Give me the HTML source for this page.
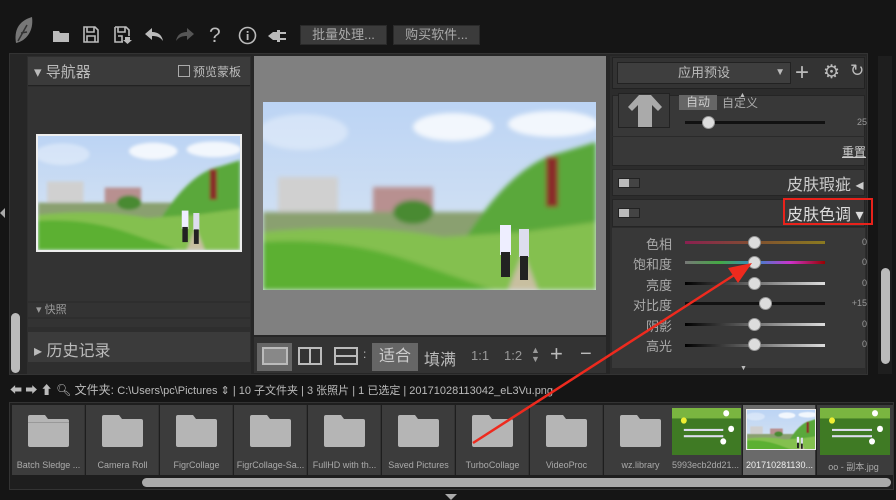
<!DOCTYPE html>
<html><head><meta charset="utf-8"><style>
*{margin:0;padding:0;box-sizing:border-box}
body{width:896px;height:500px;background:#151515;position:relative;overflow:hidden;font-family:"Liberation Sans","Noto Sans CJK SC",sans-serif;color:#bbb}
.a{position:absolute}
.btn{position:absolute;top:25px;height:20px;background:#3b3b3b;border:1px solid #2a2a2a;color:#aaa;font-size:13px;line-height:18px;text-align:center}
.ic{position:absolute;top:26px;color:#bbb;font-size:20px;line-height:20px}
.lbl{position:absolute;right:224px;font-size:13px;color:#aaa;text-align:right;width:60px}
.trk{position:absolute;left:685px;width:140px;height:3px}
.knob{position:absolute;width:13px;height:13px;border-radius:50%;background:#ddd;border:1px solid #999}
.val{position:absolute;left:845px;width:22px;text-align:right;font-size:9px;color:#999}
.fi{position:absolute;top:405px;width:73px;height:70px;background:#3c3c3c;border-right:1px solid #333}
.fd{position:absolute;left:16px;top:10px;width:41px;height:32px}
.fl{position:absolute;left:0;width:73px;top:55px;text-align:center;font-size:9px;color:#aaa;white-space:nowrap;overflow:hidden}
</style></head><body>
<svg width="0" height="0" style="position:absolute"><defs>
<linearGradient id="sky" x1="0" y1="0" x2="0" y2="1"><stop offset="0" stop-color="#bcd4f4"/><stop offset="1" stop-color="#dbe6f2"/></linearGradient>
<filter id="bl"><feGaussianBlur stdDeviation="2.5"/></filter>
<symbol id="photo" viewBox="0 0 333 188" preserveAspectRatio="none">
<rect width="333" height="188" fill="url(#sky)"/>
<g filter="url(#bl)">
<ellipse cx="190" cy="25" rx="40" ry="14" fill="#fff" opacity=".8"/><ellipse cx="290" cy="22" rx="45" ry="13" fill="#fff" opacity=".8"/>
<ellipse cx="40" cy="30" rx="45" ry="18" fill="#fff" opacity=".35"/>
<rect x="15" y="75" width="60" height="35" fill="#d0d0d0"/><rect x="110" y="85" width="60" height="35" fill="#b89090"/>
<rect x="0" y="110" width="333" height="30" fill="#8aa070"/>
<path d="M200 140 Q250 60 300 50 L333 40 L333 130 Z" fill="#5aa83a"/>
<ellipse cx="150" cy="110" rx="20" ry="12" fill="#4a8a30"/>
<rect x="283" y="55" width="12" height="50" fill="#8a2a2a"/>
<path d="M0 130 Q100 120 180 135 L260 130 L333 120 L333 188 L0 188Z" fill="#84c050"/>
<path d="M0 140 Q80 135 150 160 L230 188 L0 188Z" fill="#5cb030"/>
<path d="M245 188 L260 150 L275 188Z" fill="#c8bfa0"/>
</g>
<rect x="237" y="123" width="11" height="30" fill="#eef"/><rect x="238" y="150" width="9" height="25" fill="#222"/>
<rect x="256" y="127" width="10" height="28" fill="#dde"/><rect x="257" y="154" width="8" height="24" fill="#222"/>
</symbol>
<symbol id="grass" viewBox="0 0 70 45" preserveAspectRatio="none">
<rect width="70" height="45" fill="#3f7a24"/><rect y="0" width="70" height="10" fill="#7ab540"/>
<circle cx="55" cy="5" r="3" fill="#fff"/><circle cx="60" cy="20" r="3" fill="#fff"/><circle cx="52" cy="32" r="3" fill="#fff"/><circle cx="12" cy="12" r="3" fill="#ee3"/>
<rect x="12" y="20" width="40" height="2" fill="#dde"/><rect x="12" y="26" width="40" height="2" fill="#dde"/>
</symbol>
</defs></svg>

<svg class="a" style="left:12px;top:15px" width="24" height="32" viewBox="0 0 24 32"><path d="M20 2 C6 6 2 16 4 28 C14 26 22 16 20 2Z" fill="#777"/><path d="M6 26 L15 10 M9 18 L15 17" stroke="#333" stroke-width="1.5" fill="none"/></svg>
<svg class="a" style="left:53px;top:29px" width="16" height="13"><path d="M0 2h6l1 2h9v9H0z" fill="#bbb"/></svg>
<svg class="a" style="left:83px;top:26px" width="16" height="17" viewBox="0 0 16 17"><path d="M1 1h11l3 3v12H1z M4 1v5h7V1 M4 10h8v6H4z" stroke="#bbb" stroke-width="1.6" fill="none"/></svg>
<svg class="a" style="left:114px;top:26px" width="18" height="18" viewBox="0 0 18 18"><path d="M1 1h11l3 3v6 M1 1v15h8 M4 1v5h7V1 M4 10h4v6" stroke="#bbb" stroke-width="1.6" fill="none"/><path d="M11 11h5v3h2l-4.5 4-4.5-4h2z" fill="#bbb"/></svg>
<svg class="a" style="left:145px;top:28px" width="18" height="14"><path d="M7 0L0 6l7 6V8c5 0 8 1 11 5-1-6-5-9-11-9z" fill="#bbb"/></svg>
<svg class="a" style="left:176px;top:28px" width="18" height="14"><path d="M11 0l7 6-7 6V8C6 8 3 9 0 13 1 7 5 4 11 4z" fill="#555"/></svg>
<div class="ic" style="left:209px;font-size:21px">?</div>
<svg class="a" style="left:238px;top:26px" width="19" height="19"><circle cx="9.5" cy="9.5" r="8" stroke="#bbb" stroke-width="1.6" fill="none"/><rect x="8.7" y="8" width="1.8" height="6" fill="#bbb"/><rect x="8.7" y="5" width="1.8" height="1.8" fill="#bbb"/></svg>
<svg class="a" style="left:268px;top:29px" width="20" height="14"><path d="M0 7l5-4h4v8H5z M9 1h3v12H9z M12 3h6v2h-6z M12 9h6v2h-6z" fill="#bbb"/></svg>
<div class="btn" style="left:300px;width:87px">批量处理...</div>
<div class="btn" style="left:393px;width:87px">购买软件...</div>

<div class="a" style="left:9px;top:53px;width:859px;height:322px;background:#262626;border:1px solid #333"></div>
<div class="a" style="left:0;top:208px;width:0;height:0;border-top:5px solid transparent;border-bottom:5px solid transparent;border-right:5px solid #aaa"></div>
<div class="a" style="left:11px;top:313px;width:9px;height:60px;background:#bbb;border-radius:5px"></div>

<div class="a" style="left:27px;top:56px;width:224px;height:318px;background:#2e2e2e"></div>
<div class="a" style="left:28px;top:57px;width:222px;height:29px;background:#3b3b3b;border-bottom:1px solid #222"></div>
<div class="a" style="left:34px;top:61px;font-size:15px;color:#bbb">▾ 导航器</div>
<div class="a" style="left:178px;top:65px;width:12px;height:12px;border:1px solid #aaa"></div>
<div class="a" style="left:193px;top:63px;font-size:12px;color:#bbb">预览蒙板</div>
<div class="a" style="left:28px;top:87px;width:222px;height:214px;background:#333"></div>
<div class="a" style="left:36px;top:134px;width:206px;height:118px;border:2px solid #eee;background:#fff"><svg width="202" height="114"><use href="#photo" width="202" height="114"/></svg></div>
<div class="a" style="left:28px;top:303px;width:222px;height:14px;background:#333;font-size:11px;color:#999;line-height:14px;padding-left:8px;overflow:hidden">▾ 快照</div>
<div class="a" style="left:28px;top:319px;width:222px;height:8px;background:#333"></div>
<div class="a" style="left:28px;top:332px;width:222px;height:30px;background:#3b3b3b"></div>
<div class="a" style="left:34px;top:337px;font-size:16px;color:#bbb">▸ 历史记录</div>

<div class="a" style="left:254px;top:56px;width:352px;height:279px;background:#808080"></div>
<svg class="a" style="left:263px;top:102px" width="333" height="188"><use href="#photo" width="333" height="188"/></svg>
<div class="a" style="left:254px;top:337px;width:352px;height:36px;background:#333"></div>
<div class="a" style="left:257px;top:343px;width:35px;height:28px;background:#666"></div>
<div class="a" style="left:262px;top:347px;width:26px;height:18px;border:2px solid #bbb;background:#888"></div>
<div class="a" style="left:298px;top:347px;width:24px;height:18px;border:2px solid #bbb"></div><div class="a" style="left:309px;top:347px;width:2px;height:18px;background:#bbb"></div>
<div class="a" style="left:334px;top:347px;width:24px;height:18px;border:2px solid #bbb"></div><div class="a" style="left:334px;top:355px;width:24px;height:2px;background:#bbb"></div>
<div class="a" style="left:363px;top:347px;font-size:12px;color:#bbb">:</div>
<div class="a" style="left:372px;top:343px;width:46px;height:28px;background:#666;color:#ccc;font-size:16px;text-align:center;line-height:28px">适合</div>
<div class="a" style="left:424px;top:346px;font-size:16px;color:#bbb">填满</div>
<div class="a" style="left:471px;top:348px;font-size:13px;color:#999">1:1</div>
<div class="a" style="left:504px;top:348px;font-size:13px;color:#999">1:2</div>
<div class="a" style="left:531px;top:346px;font-size:9px;color:#999;line-height:9px">▲<br>▼</div>
<div class="a" style="left:550px;top:341px;font-size:22px;color:#bbb">+</div>
<div class="a" style="left:580px;top:343px;font-size:20px;color:#bbb">−</div>

<div class="a" style="left:610px;top:56px;width:256px;height:318px;background:#2c2c2c"></div>
<div class="a" style="left:612px;top:57px;width:253px;height:32px;background:#333;border:1px solid #222"></div>
<div class="a" style="left:617px;top:62px;width:174px;height:22px;background:#3e3e3e;border:1px solid #222;font-size:13px;color:#bbb;line-height:20px;text-align:center">应用预设<span style="position:absolute;right:5px;font-size:10px">▼</span></div>
<div class="a" style="left:795px;top:59px;font-size:24px;color:#bbb">+</div>
<div class="a" style="left:823px;top:61px;font-size:19px;color:#bbb">⚙</div>
<div class="a" style="left:850px;top:61px;font-size:17px;color:#bbb">↻</div>
<div class="a" style="left:612px;top:95px;width:253px;height:71px;background:#383838;border:1px solid #252525"></div>
<div class="a" style="left:739px;top:92px;font-size:7px;color:#bbb">▲</div>
<div class="a" style="left:618px;top:93px;width:52px;height:35px;border:1px solid #222;background:#383838"></div>
<svg class="a" style="left:626px;top:95px" width="38" height="32"><path d="M13 0h12l11 12-4 4-6-6v22H12V10l-6 6-4-4z" fill="#aaa"/></svg>
<div class="a" style="left:679px;top:95px;width:38px;height:15px;background:#666;color:#ccc;font-size:12px;line-height:15px;text-align:center">自动</div>
<div class="a" style="left:722px;top:94px;font-size:12px;color:#aaa">自定义</div>
<div class="trk" style="top:121px;background:#111"></div>
<div class="knob" style="left:702px;top:116px"></div>
<div class="val" style="top:117px">25</div>
<div class="a" style="left:612px;top:136px;width:253px;height:1px;background:#2a2a2a"></div>
<div class="a" style="left:842px;top:143px;font-size:12px;color:#ccc;text-decoration:underline">重置</div>
<div class="a" style="left:612px;top:169px;width:253px;height:27px;background:#383838;border:1px solid #252525"></div>
<div class="a" style="left:618px;top:178px;width:22px;height:10px;border:1px solid #222;background:#444"><div style="width:10px;height:8px;background:#bbb"></div></div>
<div class="a" style="left:787px;top:171px;font-size:16px;color:#ccc">皮肤瑕疵 ◂</div>
<div class="a" style="left:612px;top:199px;width:253px;height:28px;background:#383838;border:1px solid #252525"></div>
<div class="a" style="left:618px;top:208px;width:22px;height:10px;border:1px solid #222;background:#444"><div style="width:10px;height:8px;background:#bbb"></div></div>
<div class="a" style="left:783px;top:198px;width:90px;height:27px;border:2px solid #e8221b"></div>
<div class="a" style="left:787px;top:201px;font-size:16px;color:#ddd">皮肤色调 ▾</div>
<div class="a" style="left:612px;top:228px;width:253px;height:140px;background:#383838"></div>
<div class="lbl" style="top:234px">色相</div>
<div class="trk" style="top:241px;background:linear-gradient(90deg,#8a2050,#805030,#8a7a20)"></div>
<div class="knob" style="left:748px;top:236px"></div><div class="val" style="top:237px">0</div>
<div class="lbl" style="top:254px">饱和度</div>
<div class="trk" style="top:261px;background:linear-gradient(90deg,#777,#4a4,#38c,#c3c,#900)"></div>
<div class="knob" style="left:748px;top:256px"></div><div class="val" style="top:257px">0</div>
<div class="lbl" style="top:275px">亮度</div>
<div class="trk" style="top:282px;background:linear-gradient(90deg,#000,#ddd)"></div>
<div class="knob" style="left:748px;top:277px"></div><div class="val" style="top:278px">0</div>
<div class="lbl" style="top:295px">对比度</div>
<div class="trk" style="top:302px;background:#111"></div>
<div class="knob" style="left:759px;top:297px"></div><div class="val" style="top:298px">+15</div>
<div class="lbl" style="top:316px">阴影</div>
<div class="trk" style="top:323px;background:linear-gradient(90deg,#000,#ddd)"></div>
<div class="knob" style="left:748px;top:318px"></div><div class="val" style="top:319px">0</div>
<div class="lbl" style="top:336px">高光</div>
<div class="trk" style="top:344px;background:linear-gradient(90deg,#000,#ddd)"></div>
<div class="knob" style="left:748px;top:338px"></div><div class="val" style="top:339px">0</div>
<div class="a" style="left:740px;top:365px;font-size:7px;color:#bbb">▼</div>
<div class="a" style="left:878px;top:56px;width:14px;height:318px;background:#1e1e1e"></div>
<div class="a" style="left:881px;top:268px;width:9px;height:96px;background:#bbb;border-radius:5px"></div>

<div class="a" style="left:10px;top:381px;font-size:12px;color:#bbb;white-space:nowrap">⬅ ➡ ⬆ 🔍︎ 文件夹: <span style="font-size:11px">C:\Users\pc\Pictures ⇕ | 10 子文件夹 | 3 张照片 | 1 已选定 | 20171028113042_eL3Vu.png</span></div>

<div class="a" style="left:9px;top:402px;width:885px;height:88px;background:#1e1e1e;border:1px solid #333"></div>
<div class="fi" style="left:12px"><div class="fd"><svg width="41" height="32"><path d="M2 0h15l3 4h19a2 2 0 012 2v24a2 2 0 01-2 2H2a2 2 0 01-2-2V2a2 2 0 012-2z" fill="#b5b5b5"/><rect x="0" y="7" width="41" height="1" fill="#999"/></svg></div><div class="fl">Batch Sledge ...</div></div>
<div class="fi" style="left:86px"><div class="fd"><svg width="41" height="32"><path d="M2 0h15l3 4h19a2 2 0 012 2v24a2 2 0 01-2 2H2a2 2 0 01-2-2V2a2 2 0 012-2z" fill="#b5b5b5"/></svg></div><div class="fl">Camera Roll</div></div>
<div class="fi" style="left:160px"><div class="fd"><svg width="41" height="32"><path d="M2 0h15l3 4h19a2 2 0 012 2v24a2 2 0 01-2 2H2a2 2 0 01-2-2V2a2 2 0 012-2z" fill="#b5b5b5"/></svg></div><div class="fl">FigrCollage</div></div>
<div class="fi" style="left:234px"><div class="fd"><svg width="41" height="32"><path d="M2 0h15l3 4h19a2 2 0 012 2v24a2 2 0 01-2 2H2a2 2 0 01-2-2V2a2 2 0 012-2z" fill="#b5b5b5"/></svg></div><div class="fl">FigrCollage-Sa...</div></div>
<div class="fi" style="left:308px"><div class="fd"><svg width="41" height="32"><path d="M2 0h15l3 4h19a2 2 0 012 2v24a2 2 0 01-2 2H2a2 2 0 01-2-2V2a2 2 0 012-2z" fill="#b5b5b5"/></svg></div><div class="fl">FullHD with th...</div></div>
<div class="fi" style="left:382px"><div class="fd"><svg width="41" height="32"><path d="M2 0h15l3 4h19a2 2 0 012 2v24a2 2 0 01-2 2H2a2 2 0 01-2-2V2a2 2 0 012-2z" fill="#b5b5b5"/></svg></div><div class="fl">Saved Pictures</div></div>
<div class="fi" style="left:456px"><div class="fd"><svg width="41" height="32"><path d="M2 0h15l3 4h19a2 2 0 012 2v24a2 2 0 01-2 2H2a2 2 0 01-2-2V2a2 2 0 012-2z" fill="#b5b5b5"/></svg></div><div class="fl">TurboCollage</div></div>
<div class="fi" style="left:530px"><div class="fd"><svg width="41" height="32"><path d="M2 0h15l3 4h19a2 2 0 012 2v24a2 2 0 01-2 2H2a2 2 0 01-2-2V2a2 2 0 012-2z" fill="#b5b5b5"/></svg></div><div class="fl">VideoProc</div></div>
<div class="fi" style="left:604px"><div class="fd"><svg width="41" height="32"><path d="M2 0h15l3 4h19a2 2 0 012 2v24a2 2 0 01-2 2H2a2 2 0 01-2-2V2a2 2 0 012-2z" fill="#b5b5b5"/></svg></div><div class="fl">wz.library</div></div>
<div class="fi" style="left:669px"><svg class="a" style="left:3px;top:3px" width="69" height="47"><use href="#grass" width="69" height="47"/></svg><div class="fl">5993ecb2dd21...</div></div>
<div class="fi" style="left:743px;background:#6a6a6a"><svg class="a" style="left:3px;top:4px;border:1px solid #eee" width="70" height="41"><use href="#photo" width="70" height="41"/></svg><div class="fl" style="color:#eee">201710281130...</div></div>
<div class="fi" style="left:817px;width:77px"><svg class="a" style="left:3px;top:3px" width="70" height="47"><use href="#grass" width="70" height="47"/></svg><div class="fl">oo - 副本.jpg</div></div>
<div class="a" style="left:142px;top:478px;width:749px;height:9px;background:#aaa;border-radius:5px"></div>
<div class="a" style="left:445px;top:494px;width:0;height:0;border-left:6px solid transparent;border-right:6px solid transparent;border-top:6px solid #aaa"></div>

<svg class="a" style="left:0;top:0" width="896" height="500"><line x1="473" y1="443" x2="742" y2="270" stroke="#ee2a1e" stroke-width="2.5"/><path d="M752 263 L728 268 L738 283Z" fill="#ee2a1e"/></svg>
</body></html>
